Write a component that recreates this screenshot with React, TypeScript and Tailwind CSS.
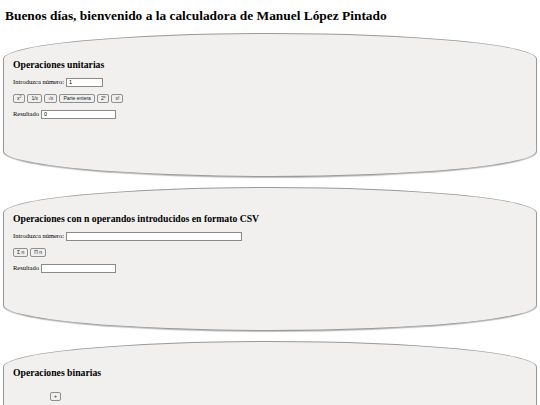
import React from 'react';

const serif = { fontFamily: '"Liberation Serif", "Times New Roman", serif' };

function Btn({ children }: { children: React.ReactNode }) {
  return (
    <button className="h-[9px] px-[3px] flex items-center border border-[#8f8f8f] rounded-[2px] bg-[#efefef] text-[5px] leading-none text-[#222] font-['Liberation_Sans',sans-serif]">
      {children}
    </button>
  );
}

function Field({ w, value }: { w: string; value?: string }) {
  return (
    <div className={`h-[9px] ${w} border border-[#8a8a8a] bg-white flex items-center px-[2px] text-[5.5px] leading-none text-black font-['Liberation_Sans',sans-serif]`}>
      {value}
    </div>
  );
}

function Section({ title, children, className }: { title: string; children?: React.ReactNode; className?: string }) {
  return (
    <section
      className={`mx-[3px] h-[144px] bg-[#f1f0ef] border border-[#9a9a9a] rounded-[50%/26px] shadow-[0_1px_1px_rgba(0,0,0,0.25)] pl-[9px] pt-[24px] ${className ?? ''}`}
    >
      <h2 className="text-[9.7px] leading-[13px] font-bold text-black">{title}</h2>
      <div className="mt-[7px] flex flex-col gap-[7px] text-[6.5px] leading-none text-black">{children}</div>
    </section>
  );
}

export default function App() {
  return (
    <div className="w-[540px] h-[405px] overflow-hidden bg-white" style={serif}>
      <h1 className="pt-[8px] pl-[5px] text-[13.4px] leading-[15px] font-bold text-black">
        Buenos días, bienvenido a la calculadora de Manuel López Pintado
      </h1>

      <Section title="Operaciones unitarias" className="mt-[10px]">
        <div className="flex items-center gap-[2px]">
          <span>Introduzca número:</span>
          <Field w="w-[37px]" value="1" />
        </div>
        <div className="flex items-center gap-[2px]">
          <Btn>x<sup className="text-[3.5px]">2</sup></Btn>
          <Btn>1/x</Btn>
          <Btn>√x</Btn>
          <Btn>Parte entera</Btn>
          <Btn>2<sup className="text-[3.5px]">x</sup></Btn>
          <Btn>x!</Btn>
        </div>
        <div className="flex items-center gap-[2px]">
          <span>Resultado</span>
          <Field w="w-[75px]" value="0" />
        </div>
      </Section>

      <Section title="Operaciones con n operandos introducidos en formato CSV" className="mt-[10px]">
        <div className="flex items-center gap-[2px]">
          <span>Introduzca número:</span>
          <Field w="w-[176px]" />
        </div>
        <div className="flex items-center gap-[2px]">
          <Btn>Σ n</Btn>
          <Btn>Π n</Btn>
        </div>
        <div className="flex items-center gap-[2px]">
          <span>Resultado</span>
          <Field w="w-[75px]" />
        </div>
      </Section>

      <Section title="Operaciones binarias" className="mt-[10px]">
        <div className="pl-[37px] pt-[6px] flex">
          <Btn>+</Btn>
        </div>
      </Section>
    </div>
  );
}
